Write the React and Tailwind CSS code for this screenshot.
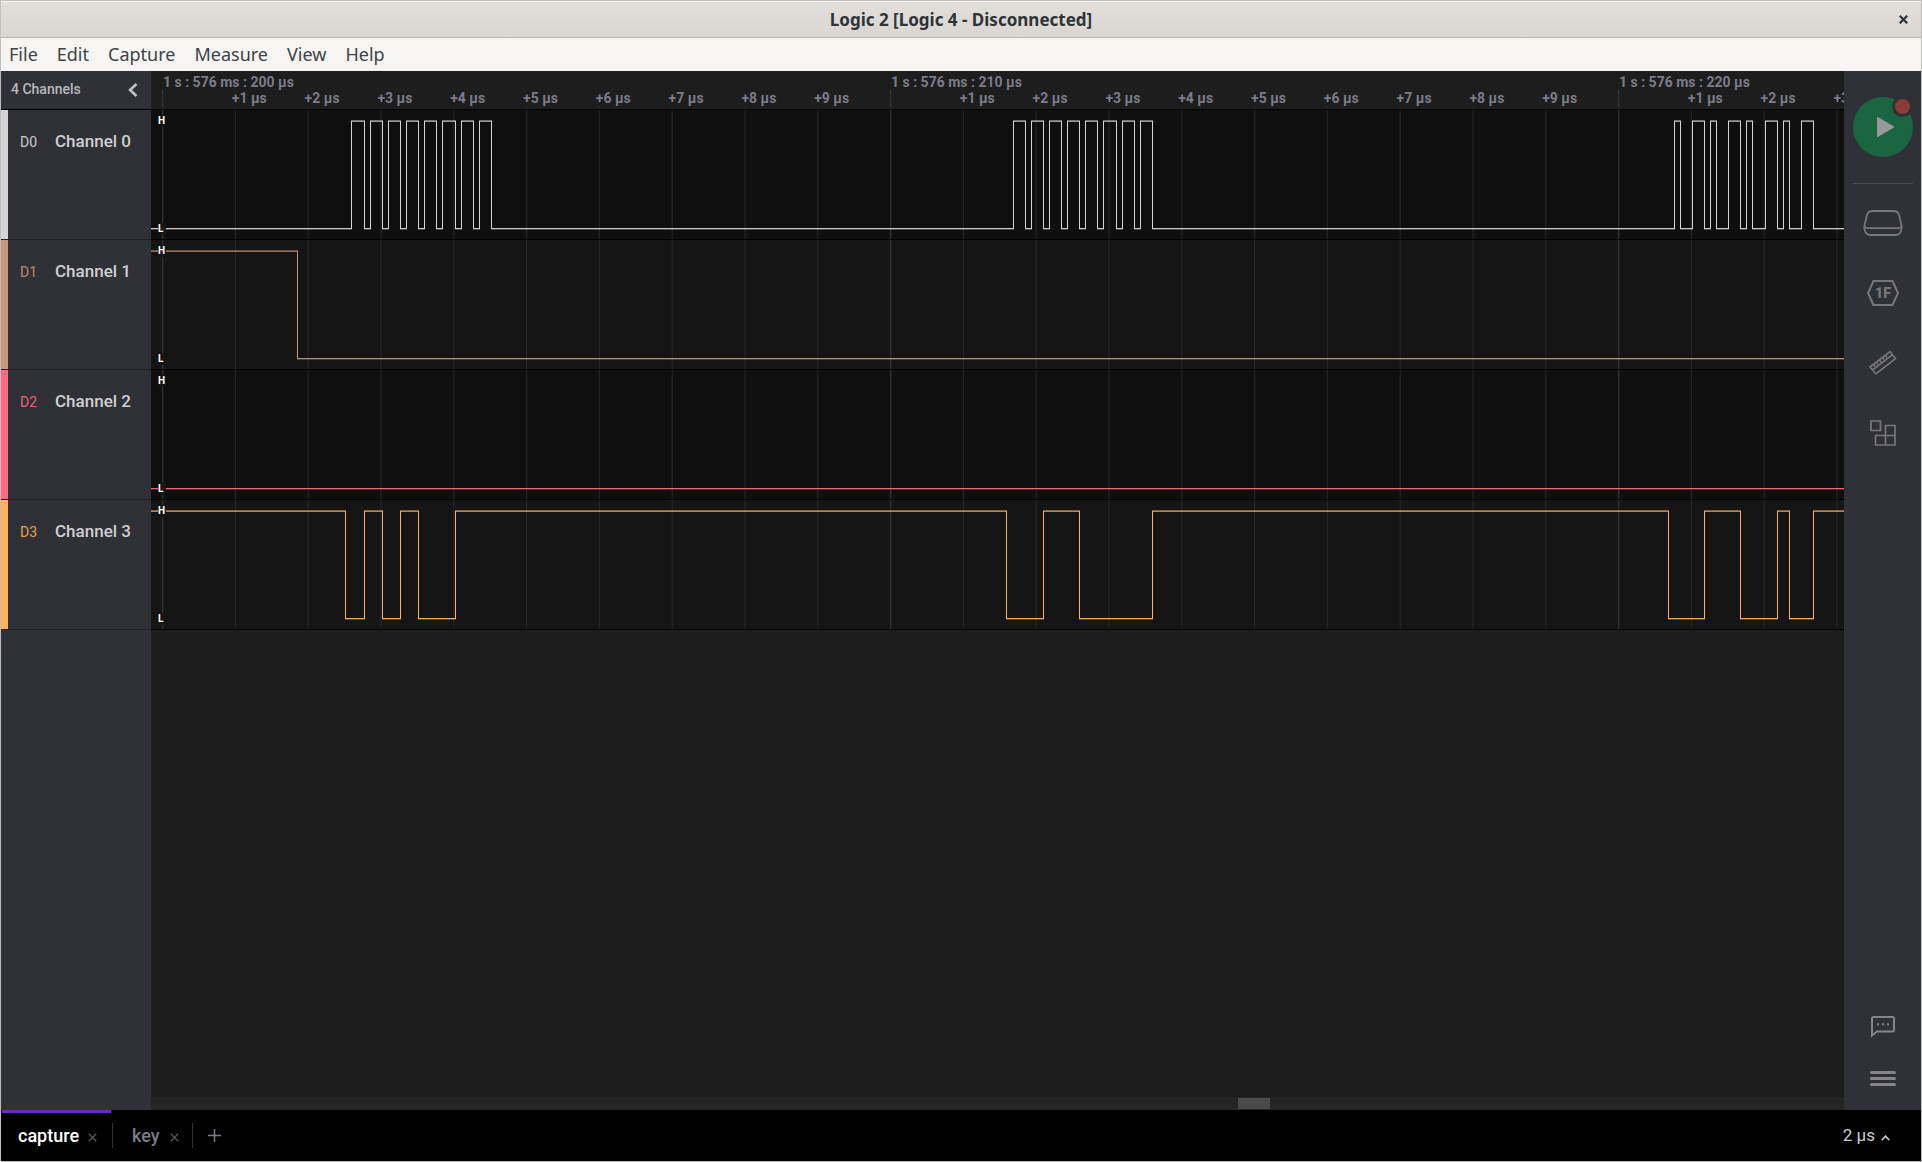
const MAJOR = [
  { label: "1 s : 576 ms : 200 µs", minor: [1, 2, 3, 4, 5, 6, 7, 8, 9] },
  { label: "1 s : 576 ms : 210 µs", minor: [1, 2, 3, 4, 5, 6, 7, 8, 9] },
  { label: "1 s : 576 ms : 220 µs", minor: [1, 2, 3] },
];

const CHANNELS = [
  {
    id: "D0", name: "Channel 0", start: 0, text: "text-[#c9c9cc]", strip: "bg-[#d4d4d4]", stroke: "stroke-[#d4d4d4]", lane: "bg-[#0f0f0f]",
    edges: [200, 213, 219, 231, 237, 249, 255, 267, 273, 285, 291, 304, 310, 322, 328, 340, 862, 874, 880, 892, 898, 910, 916, 928, 934, 946, 952, 965, 971, 983, 989, 1001, 1523, 1529, 1541, 1553, 1559, 1565, 1577, 1589, 1595, 1601, 1614, 1626, 1632, 1638, 1650, 1662],
  },
  { id: "D1", name: "Channel 1", start: 1, text: "text-[#b98a70]", strip: "bg-[#c8967a]", stroke: "stroke-[#c8967a]", lane: "bg-[#151515]", edges: [146] },
  { id: "D2", name: "Channel 2", start: 0, text: "text-[#e8607a]", strip: "bg-[#ff6b81]", stroke: "stroke-[#ff6b7d]", lane: "bg-[#0f0f0f]", edges: [] },
  {
    id: "D3", name: "Channel 3", start: 1, text: "text-[#e8a14f]", strip: "bg-[#ffb25b]", stroke: "stroke-[#ffb25b]", lane: "bg-[#151515]",
    edges: [194, 213, 231, 249, 267, 304, 855, 892, 928, 1001, 1517, 1553, 1589, 1626, 1638, 1662],
  },
];

const HIGH = 11;
const LOW = 118;
const END = 4000;

function segments(start, edges) {
  const out = [];
  let level = start;
  let x = 0;
  for (const e of [...edges, END]) {
    out.push({ x1: x, x2: e + 1, level });
    x = e;
    level = 1 - level;
  }
  return out;
}

function Grid({ ruler }) {
  const lines = [];
  for (let i = 0; i < 50; i++) {
    const major = i % 10 === 0;
    lines.push(
      <rect key={i} x={11 + i * 72.8} y={ruler ? (major ? 19 : 35) : 0} width={major ? 1.4 : 1.2} height="140"
        className={major ? "fill-[#313134]" : "fill-[#252528]"} />
    );
  }
  return <g>{lines}</g>;
}

function Wave({ ch }) {
  const segs = segments(ch.start, ch.edges);
  return (
    <svg className="absolute inset-0 h-full w-full" aria-hidden="true">
      <Grid />
      {segs.map((s, i) => (
        <g key={i} className={ch.stroke}>
          <line x1={s.x1} x2={s.x2} y1={(s.level ? HIGH : LOW) + 0.5} y2={(s.level ? HIGH : LOW) + 0.5} strokeOpacity={s.level ? 0.7 : 0.95} />
          <line x1={s.x1} x2={s.x2} y1={(s.level ? HIGH - 1 : LOW + 1) + 0.5} y2={(s.level ? HIGH - 1 : LOW + 1) + 0.5} strokeOpacity={s.level ? 0.5 : 0.3} />
        </g>
      ))}
      {ch.edges.map((e) => (
        <line key={e} className={ch.stroke} x1={e + 0.5} x2={e + 0.5} y1={HIGH} y2={LOW + 1} />
      ))}
    </svg>
  );
}

function Level({ children }) {
  return <span className="flex h-3 w-2 items-center rounded-xs bg-[#151517]/90 text-[10px] leading-3 font-bold text-white">{children}</span>;
}

function ToolButton({ label, children }) {
  return (
    <button aria-label={label} className="flex h-[70px] w-full items-center justify-center text-[#77777b]">
      {children}
    </button>
  );
}

function Cross({ size, width, className }) {
  return (
    <svg width={size} height={size} viewBox="0 0 8 8" fill="none" stroke="currentColor" strokeWidth={width} className={className} aria-hidden="true">
      <path d="M0.7 0.7 7.3 7.3M7.3 0.7 0.7 7.3" />
    </svg>
  );
}

export default function App() {
  return (
    <div className="flex h-screen flex-col overflow-hidden border border-[#bfbfbf] bg-black font-['Roboto',sans-serif]">
      <header className="flex h-[37px] shrink-0 items-center border-t border-b border-t-[#f8f7f6] border-b-[#b8b4ae] bg-linear-to-b from-[#e1dedb] to-[#dad6d2] px-2.5 font-['Noto_Sans','Open_Sans',sans-serif]">
        <span className="w-4" />
        <h1 className="flex-1 text-center text-[17px] leading-6 font-bold text-[#2e3436]">Logic 2 [Logic 4 - Disconnected]</h1>
        <button aria-label="Close window" className="flex w-4 justify-center text-[#2e3436]"><Cross size="9" width="2" /></button>
      </header>

      <nav className="flex h-[33px] shrink-0 items-center gap-[19px] bg-[#f6f5f4] px-2 font-['Noto_Sans','Open_Sans',sans-serif] text-[18px] text-[#3d4345]">
        {["File", "Edit", "Capture", "Measure", "View", "Help"].map((m) => (
          <button key={m}>{m}</button>
        ))}
      </nav>

      <main className="flex min-h-0 flex-1 bg-[#1d1d1d]">
        <aside className="flex w-[150px] shrink-0 flex-col bg-[#303136]">
          <div className="flex h-[39px] items-center justify-between border-b border-black pr-3 pl-2.5">
            <h2 className="pb-0.5 text-[14px] font-medium text-[#b9b9bd]">4 Channels</h2>
            <button aria-label="Collapse channels" className="text-[#c4c4c8]">
              <svg width="12" height="14" viewBox="0 0 12 14" fill="none" stroke="currentColor" strokeWidth="2.5" aria-hidden="true"><path d="M9.5 1 3 7l6.500 6" /></svg>
            </button>
          </div>
          {CHANNELS.map((ch) => (
            <div key={ch.id} className="flex h-[130px] border-b border-[#232427]">
              <div className={`w-[7px] ${ch.strip}`} />
              <div className="flex h-[63px] items-center pl-3">
                <span className={`w-[35px] pt-0.5 text-[14px] ${ch.text}`}>{ch.id}</span>
                <span className="text-[17px] font-medium text-[#cfcfd3]">{ch.name}</span>
              </div>
            </div>
          ))}
        </aside>

        <section aria-label="Timeline" className="flex min-w-0 flex-1 flex-col overflow-hidden">
          <div className="relative h-[39px] shrink-0 overflow-hidden border-b border-black bg-[#1d1d1d] text-[14px] font-bold text-[#7c7c88]">
            <svg className="absolute inset-0 h-full w-full" aria-hidden="true"><Grid ruler /></svg>
            <div className="relative flex w-max pl-2">
              {MAJOR.map(({ label, minor }) => (
                <div key={label} className="w-[728px] pt-[3px]">
                  <div className="pl-1 leading-4">{label}</div>
                  <div className="grid grid-cols-10 leading-4">
                    <span />
                    {minor.map((n) => <span key={n}>+{n} µs</span>)}
                  </div>
                </div>
              ))}
            </div>
          </div>

          {CHANNELS.map((ch) => (
            <div key={ch.id} className={`relative h-[130px] shrink-0 overflow-hidden border-b border-black ${ch.lane}`}>
              <Wave ch={ch} />
              <div className="relative flex h-full flex-col justify-between pt-[5px] pb-1 pl-[7px]">
                <Level>H</Level>
                <Level>L</Level>
              </div>
            </div>
          ))}

          <div className="flex-1" />
          <div className="flex h-[13px] bg-[#252525] py-px">
            <div className="w-[64.2%]" />
            <div className="w-8 bg-[#4a4a4a]" />
          </div>
        </section>

        <aside className="flex w-[77px] shrink-0 flex-col items-center bg-[#303136]">
          <div className="px-2 pt-[26px] pb-[26px]">
            <button aria-label="Start capture" className="relative flex size-[60px] items-center justify-center rounded-full bg-[#1a6641]">
              <svg width="60" height="60" viewBox="0 0 60 60" aria-hidden="true"><path d="M24 20.500V39.500a.5.5 0 0 0 .8.4L41 30.600a.8.800 0 0 0 0-1.200L24.800 20.100a.5.5 0 0 0-.8.4Z" fill="#98989a" /></svg>
              <span className="absolute -top-px right-0 size-[21px] rounded-full border-3 border-[#303136] bg-[#883e37]" />
            </button>
          </div>
          <hr className="w-[60px] border-[#4a4b50]" />
          <div className="w-full pt-1">
            <ToolButton label="Device">
              <svg width="40" height="28" viewBox="0 0 40 28" fill="none" stroke="currentColor" strokeWidth="1.8" aria-hidden="true">
                <path d="M9.500 2h21c3.300 0 5 1.600 5.700 4.500l2.300 10.200c.3 1.500.3 3-.2 4.300-.8 3-2.500 5-5.500 5H7.200c-3 0-4.700-2-5.500-5-.5-1.300-.5-2.800-.2-4.300L3.800 6.500C4.500 3.600 6.200 2 9.500 2Z" />
                <path d="M1.200 17c.7 1.600 2 2.200 4 2.200h29.600c2 0 3.300-.6 4-2.200" />
              </svg>
            </ToolButton>
            <ToolButton label="Analyzers">
              <svg width="32" height="26" viewBox="0 0 32 26" aria-hidden="true">
                <path d="M6.500 1h19L31 13l-5.500 12h-19L1 13Z" fill="none" stroke="currentColor" strokeWidth="2" />
                <text x="16" y="18" textAnchor="middle" fontSize="14" fontWeight="900" fill="currentColor">1F</text>
              </svg>
            </ToolButton>
            <ToolButton label="Measurements">
              <svg width="28" height="26" viewBox="0 0 28 26" fill="none" stroke="currentColor" strokeWidth="1.600" aria-hidden="true">
                <path d="M1 17 21 1.500 26.500 8.500 6.800 24ZM3.500 20 23.300 4.800M4.500 14.500l1.500 2M7.500 12.200l1.500 2M10.500 9.900l1.500 2M13.500 7.600l1.500 2M16.500 5.200l1.500 2" />
              </svg>
            </ToolButton>
            <ToolButton label="Extensions">
              <svg width="26" height="26" viewBox="0 0 26 26" fill="none" stroke="currentColor" strokeWidth="1.700" aria-hidden="true">
                <path d="M1 1h9.500v9.500H1ZM15.500 15.500v-10h9.500v19.500H5.500v-9.500H25M15.500 15.500V25" />
              </svg>
            </ToolButton>
          </div>
          <div className="mt-auto flex flex-col items-center gap-[33px] pb-6 text-[#85858a]">
            <button aria-label="Feedback">
              <svg width="24" height="22" viewBox="0 0 24 22" fill="none" stroke="currentColor" strokeWidth="2" aria-hidden="true">
                <path d="M1 19.500V2.500C1 1.500 1.500 1 2.500 1h19c1 0 1.500.5 1.500 1.500V14c0 1-.5 1.500-1.500 1.500H6Z" />
                <path d="M6 8.200h2M11 8.200h2M16 8.200h2" />
              </svg>
            </button>
            <button aria-label="Main menu" className="flex flex-col gap-[3px]">
              <span className="h-[3px] w-[26px] rounded-full bg-current" />
              <span className="h-[3px] w-[26px] rounded-full bg-current" />
              <span className="h-[3px] w-[26px] rounded-full bg-current" />
            </button>
          </div>
        </aside>
      </main>

      <footer className="flex h-[51px] shrink-0 items-stretch bg-black">
        <div className="ml-px flex w-[109px] items-center border-t-[3px] border-[#6b2bbd] pb-1 pl-4">
          <button className="text-[18px] font-medium text-white">capture</button>
          <button aria-label="Close capture" className="mt-1 ml-[9px] text-[#55555b]"><Cross size="9" width="1.2" /></button>
        </div>
        <div className="my-[13px] ml-px flex w-[81px] items-center border-x border-[#303136] pb-px pl-[19px]">
          <button className="text-[18px] font-medium text-[#7c7c88]">key</button>
          <button aria-label="Close key" className="mt-1 ml-2.5 text-[#55555b]"><Cross size="9" width="1.2" /></button>
        </div>
        <button aria-label="New tab" className="px-[15px] text-[#7c7c88]">
          <svg width="13" height="13" viewBox="0 0 13 13" stroke="currentColor" strokeWidth="1.500" aria-hidden="true"><path d="M6.500 0v13M0 6.500h13" /></svg>
        </button>
        <button className="ml-auto flex items-center gap-1.5 pr-[31px] text-[17px] text-[#cfcfd3]">
          2 µs
          <svg width="9" height="6" viewBox="0 0 9 6" fill="none" stroke="currentColor" strokeWidth="1.500" className="mt-1" aria-hidden="true"><path d="M.7 5.300 4.500 1.200 8.300 5.300" /></svg>
        </button>
      </footer>
    </div>
  );
}
